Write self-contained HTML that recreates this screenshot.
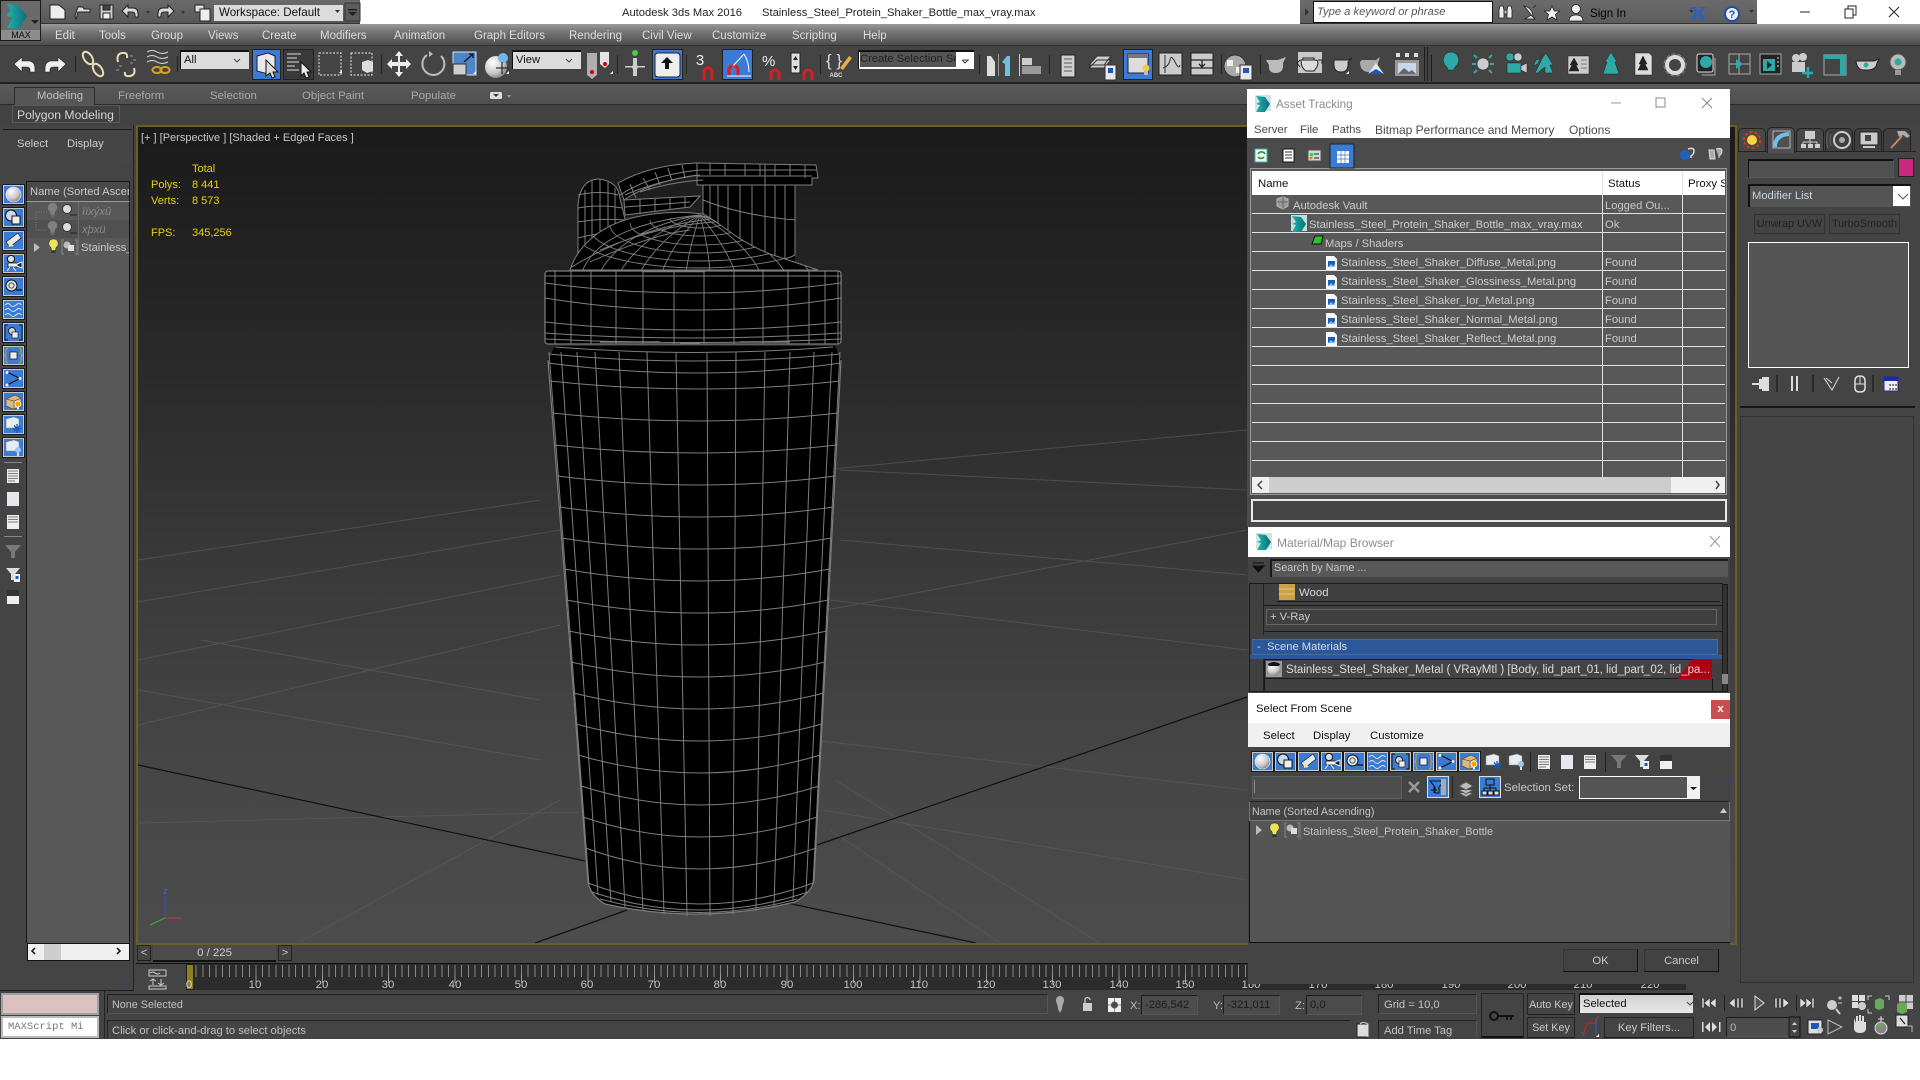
<!DOCTYPE html>
<html><head><meta charset="utf-8"><title>Autodesk 3ds Max 2016</title>
<style>
html,body{margin:0;padding:0;background:#fff;width:1920px;height:1080px;overflow:hidden}
body{position:relative;font:11.2px/14px "Liberation Sans",Arial,sans-serif;color:#cfcfcf}
div,span,svg{position:absolute;box-sizing:border-box}
.t{white-space:nowrap;margin-top:1px}
.t[style*="height:"]{margin-top:0}
.c{transform:translateX(-50%)}
.b{border:1px solid #222}
.m{color:#dcdcdc;top:28px;font-size:11.5px}
.r{color:#a8a8a8;top:88px;font-size:11.4px}
.d{color:#4a4a4a;top:122px;font-size:11.4px}
.l{left:0;right:0;height:1px;background:#e2e2e2}
.f{color:#ccc}
.n{left:1309px}
.st{left:1605px;color:#c8c8c8}
.y{color:#e6cf10;font-size:11px}
.tl{top:978px;color:#c4c4c4;font-size:11.4px;transform:translateX(-50%);margin-top:0}
.bt{background:#444;border:1px solid #262626;border-right-color:#222;border-bottom-color:#1c1c1c;color:#c8c8c8;text-align:center}
.bd{background:#4c4c4c;border:1px solid #1d1d1d;border-right-color:#555;border-bottom-color:#585858}
</style></head><body>

<!-- base -->
<div style="left:0;top:0;width:1920px;height:24px;background:#fff"></div>
<div style="left:0;top:24px;width:1920px;height:1015px;background:#444"></div>

<!-- viewport -->
<div style="left:136px;top:125px;width:1601px;height:820px;border:2px solid #6d5c26;background:linear-gradient(#1a1a1a 0,#2a2a2a 30%,#3a3a3a 55%,#464646 78%,#4c4c4c 100%);overflow:hidden"></div>
<svg style="left:0;top:0" width="1920" height="1080" viewBox="0 0 1920 1080">
<defs>
<clipPath id="vp"><rect x="138" y="127" width="1597" height="816"/></clipPath>
<clipPath id="dome"><path d="M570 270C578 245 600 228 625 220C650 212 680 211 703 214C720 222 735 240 770 254L818 270Z"/></clipPath>
<radialGradient id="ball" cx=".35" cy=".3" r=".8"><stop offset="0" stop-color="#fff"/><stop offset=".6" stop-color="#c8c8c8"/><stop offset="1" stop-color="#777"/></radialGradient>
<linearGradient id="teal" x1="0" x2="1"><stop offset="0" stop-color="#1fb5ad"/><stop offset="1" stop-color="#0d6f78"/></linearGradient>
<g id="b0"><rect x="-1" y="-1" width="23" height="21" fill="#1a1a1a"/><rect x=".5" y=".5" width="20" height="18" fill="#3a7bd5" stroke="#c8c8c8"/></g>
<g id="s0"><circle cx="10.500" cy="9.500" r="7.500" fill="url(#ball)" stroke="#eee" stroke-width=".6"/></g>
<g id="s1"><circle cx="8" cy="7.500" r="5.500" fill="#cfd7e0" stroke="#111"/><rect x="9" y="8" width="8" height="8" fill="#eee" stroke="#111"/></g>
<g id="s2"><path d="M15 2l3 5L7 16 3 11z" fill="#e8e8e8" stroke="#222" stroke-width=".7"/><path d="M5 10l6 5-5 1z" fill="#f2e6a8"/></g>
<g id="s3"><circle cx="8" cy="5" r="3.600" fill="#ddd" stroke="#111"/><rect x="5" y="9" width="9" height="4" fill="#eee" stroke="#111" stroke-width=".7"/><path d="M14 10l5-2v6l-5-2zM7 13l-3 4M10 13l3 4" stroke="#eee" fill="#222"/></g>
<g id="s4"><circle cx="8.500" cy="8.500" r="5.500" fill="#dfe5ea" stroke="#111"/><circle cx="8.500" cy="8.500" r="2.600" fill="none" stroke="#555"/><path d="M13 13h6" stroke="#111" stroke-width="1.300"/></g>
<g id="s5" fill="none" stroke="#dfe6f0" stroke-width=".9"><path d="M2 5q3-3 5.500 0t5.500 0 5.500 0M2 10q3-3 5.500 0t5.500 0 5.500 0M2 15q3-3 5.500 0t5.500 0 5.500 0"/></g>
<g id="s6"><path d="M5 2H2v15h3M16 2h3v15h-3" fill="none" stroke="#111"/><circle cx="9" cy="8" r="3.500" fill="#cfd7e0" stroke="#222"/><rect x="9" y="9" width="6" height="6" fill="#eee" stroke="#222" stroke-width=".7"/></g>
<g id="s7"><path d="M5 2q-2 0-2 3v2q0 2-1.500 2.500Q3 10 3 12v2q0 3 2 3M16 2q2 0 2 3v2q0 2 1.500 2.500Q18 10 18 12v2q0 3-2 3" fill="none" stroke="#e0a020"/><rect x="7" y="6" width="7" height="7" fill="#eee" stroke="#111" stroke-width=".7"/></g>
<g id="s8"><path d="M4 3l13 6.500L4 16" fill="none" stroke="#111" stroke-width="1.200"/><circle cx="4" cy="3.500" r="1.500" fill="#eee"/><circle cx="17" cy="9.500" r="1.500" fill="#eee"/><circle cx="4" cy="16" r="1.500" fill="#eee"/></g>
<g id="s9"><path d="M3 7l9-4 6 3v9l-8 2-7-3z" fill="#d9b98a" stroke="#553" stroke-width=".7"/><path d="M3 7l8 2 7-3M11 9v8" stroke="#6d5a3a" fill="none" stroke-width=".7"/><circle cx="15" cy="12" r="3" fill="#f5a300" stroke="#fff" stroke-width=".7"/><rect x="14" y="14.500" width="2" height="3" fill="#eee"/></g>
<g id="s10"><path d="M3 4l8-2 5 2v9H3z" fill="#e8edf2" stroke="#888" stroke-width=".6"/><path d="M14 9v9M9.500 13.500h9M11 10.500l6 6M17 10.500l-6 6" stroke="#1d58b8" stroke-width="1.300"/></g>
<g id="s11"><path d="M3 4l8-2 5 2v9H3z" fill="#e8edf2" stroke="#888" stroke-width=".6"/><circle cx="15" cy="12" r="3" fill="#9cc8ee"/><rect x="14" y="15" width="2" height="3" fill="#ddd"/></g>
<g id="bulbY"><path d="M4.500 0a4.500 4.500 0 0 1 3 8c-.8 1-1 2-1 3.500h-4C2.500 10 2 9 1.500 8A4.500 4.500 0 0 1 4.500 0z" fill="#ece25a" stroke="#222" stroke-width=".5"/><rect x="2.500" y="11.500" width="4" height="2.500" fill="#333"/></g>
<g id="bulbG"><path d="M4.500 0a4.500 4.500 0 0 1 3 8c-.8 1-1 2-1 3.500h-4C2.500 10 2 9 1.500 8A4.500 4.500 0 0 1 4.500 0z" fill="#808080"/><rect x="2.500" y="11.500" width="4" height="2.500" fill="#6a6a6a"/></g>
<g id="doc"><path d="M1 0h8l3 3v11H1z" fill="#f5f7fa"/><rect x="3" y="5" width="7" height="6" fill="#1a5fb0"/><path d="M3 11l3-3 2 2 2-2v3z" fill="#7cc0f0"/></g>
<g id="logo"><path d="M1 1l9 1 5 7-5 8-9 0 4-7-4-1 4-2z" fill="url(#teal)"/></g>
</defs>

<g clip-path="url(#vp)">
<!-- grid -->
<g stroke="#5e5e5e" stroke-width="1" fill="none" opacity=".6">
<path d="M138 602L560 530M138 660L560 575M138 725L560 625M138 823L583 812M540 760L138 690"/>
<path d="M821 741L1247 790M822 810L1247 880M840 540L1247 575M830 600L1247 650M840 470L1247 490M300 942L560 800M540 700L200 640M1000 943L830 830M1100 943L835 780"/>
<path d="M138 560L540 500M820 470L1247 430M826 610L1247 530"/>
</g>
<g stroke="#111" stroke-width="1.200" fill="none">
<path d="M138 765L585 861M817 845L1247 697M627 910L535 943M787 903L976 943"/>
</g>
<!-- bottle body -->
<path d="M555 346H835L841 360 814 880Q812 892 795 902Q700 925 605 904Q590 895 588 882L548 360Z" fill="#000"/>
<g fill="none" stroke="#7e7e7e" stroke-width="1">
<path d="M585.500 848Q700 890 816 848M583 817Q700 857 817 817M581 786Q700 824 819 786M578 755Q700 791 820.500 755M576 724Q700 758 822 724M573.600 693Q700 725 824 693M571 662Q700 692 825 662M569 631Q700 659 827 631M566.500 600Q700 626 828.500 600M564 569Q700 593 830 569M561.700 538Q700 560 832 538M559 507Q700 527 833 507M557 476Q700 494 835 476M554.500 445Q700 461 836.600 445M552 413Q700 429 838 413M549.600 381Q700 397 840 381M548 363Q700 383 841 363"/>
<path d="M555 347Q694 358 833 347M549 354Q694 368 840 354"/>
<path d="M588 883Q700 925 813 883M592 892Q700 928 808 892M600 899Q700 926 797 899"/>
<path d="M549 352L589 885M561 352L598 895M577 352L611 902M595 352L625 907M619 352L643 911M647 352L664 914M676 352L687 916M707 352L710 916M736 352L733 914M765 352L756 911M790 352L774 907M814 352L793 901M832 352L806 893M840 352L813 885"/>
<path d="M548 360L588 882Q590 895 605 904Q700 925 795 902Q812 892 814 880L841 360" stroke-width="1.200"/>
</g>
<!-- lid band -->
<rect x="545" y="271" width="296" height="73" rx="3" fill="#000"/>
<g fill="none" stroke="#7e7e7e">
<rect x="545" y="271" width="296" height="73" rx="3" stroke-width="1.200"/>
<path d="M545 276H841M545 283Q690 303 841 283M545 298Q690 322 841 298M545 322Q690 338 841 322M545 333Q690 343 841 333M545 339Q690 346 841 339"/>
<path d="M555 271V344M571 271V344M591 271V344M616 271V344M643 271V344M674 271V344M704 271V344M734 271V344M763 271V344M788 271V344M809 271V344M825 271V344M838 271V344"/>
<path d="M642 271.500H705M600 342H660M680 343H700M740 342H790" stroke-width="1.600"/>
</g>
<!-- loop/handle -->
<path d="M578 265V205Q580 180 598 179Q612 180 618 190L630 240L590 262Z" fill="#000" stroke="#7e7e7e"/>
<g fill="none" stroke="#7e7e7e">
<path d="M585 262V190M592 258V181M600 252V179M608 244V182M615 236V188M578 195Q600 190 618 195M578 208Q600 204 622 208M578 222Q600 218 625 220M578 238Q600 232 627 232M578 252Q590 248 605 245"/>
</g>
<!-- cap -->
<rect x="703" y="183" width="92" height="78" fill="#000"/>
<g fill="none" stroke="#7e7e7e">
<path d="M703 183V215M710 183V222M718 183V228M728 183V234M740 183V242M752 183V250M765 183V258M775 183V260M785 183V261M795 183V255"/>
<path d="M703 200Q740 215 795 220M703 215Q725 235 763 257Q780 263 795 255"/>
</g>
<!-- dome -->
<path d="M570 270C578 245 600 228 625 220C650 212 680 211 703 214C720 222 735 240 770 254L818 270Z" fill="#000" stroke="#7e7e7e"/>
<g clip-path="url(#dome)" fill="none" stroke="#7e7e7e" stroke-width=".9">
<path d="M670 218A30 10 0 0 0 730 218M650 220A50 16 0 0 0 750 220M630 223A70 22 0 0 0 770 223M610 225A90 28 0 0 0 790 225M590 228A110 33 0 0 0 810 228M575 232A125 36 0 0 0 825 232"/>
<path d="M700 215Q600 225 582 272M700 215Q625 228 600 272M700 215Q645 232 620 272M700 215Q660 238 640 272M700 215Q672 245 662 272M700 215Q690 245 686 272M700 215Q708 245 710 272M700 215Q725 245 735 272M700 215Q745 242 760 272M700 215Q765 240 785 272M700 215Q785 238 810 272"/>
<path d="M570 268Q640 225 720 218M600 250Q660 225 715 222M590 262Q650 235 690 230"/>
</g>
<!-- flip top -->
<path d="M618 183Q650 165 697 163L816 165 818 178 812 178 812 185H697V175Q650 182 624 200Z" fill="#000" stroke="#7e7e7e"/>
<g fill="none" stroke="#7e7e7e">
<path d="M697 163V185M620 195Q650 175 700 170H816M630 184L636 198M643 178L650 190M655 172L660 185M668 168L672 181M682 165L685 178M710 163V175M725 164V176M745 164V176M760 164V176M765 164V185M775 165V176M790 165V176M805 165V178M697 176H812"/>
<path d="M624 200L700 196 690 207 625 215ZM640 199V214M655 198V212M670 197V210M685 197V208M625 207L690 202" fill="#000"/>
<path d="M625 195Q660 180 700 175M640 192Q670 182 703 180" />
</g>
<!-- axis -->
<g fill="none" stroke-width="1"><path d="M165 918V895" stroke="#3050d8"/><path d="M165 918L150 925" stroke="#2fb32f"/><path d="M165 918H182" stroke="#d83030"/></g>
</g>
</svg>
<div class="t" style="left:163px;top:883px;font-size:9px;color:#4866e0">z</div>
<div class="t" style="left:141px;top:130px;color:#c8c8c8;font-size:11px">[+ ] [Perspective ] [Shaded + Edged Faces ]</div>
<div class="t y" style="left:192px;top:161px">Total</div>
<div class="t y" style="left:151px;top:177px">Polys:</div><div class="t y" style="left:192px;top:177px">8 441</div>
<div class="t y" style="left:151px;top:193px">Verts:</div><div class="t y" style="left:192px;top:193px">8 573</div>
<div class="t y" style="left:151px;top:225px">FPS:</div><div class="t y" style="left:192px;top:225px">345,256</div>

<!-- title bar -->
<div style="left:0;top:0;width:360px;height:24px;background:linear-gradient(#6a6a6a,#585858);border-bottom:1px solid #333"></div>
<div style="left:214px;top:5px;width:129px;height:16px;background:#dcdcdc"></div>
<div class="t" style="left:219px;top:5px;color:#111;font-size:11.6px">Workspace: Default</div>
<div class="t" style="left:622px;top:5px;color:#222">Autodesk 3ds Max 2016</div>
<div class="t" style="left:762px;top:5px;color:#222">Stainless_Steel_Protein_Shaker_Bottle_max_vray.max</div>
<div style="left:1300px;top:0;width:457px;height:24px;background:linear-gradient(#6b6b6b,#5d5d5d);border-bottom:1px solid #333"></div>
<div class="t" style="left:1313px;top:1px;width:180px;height:22px;background:#fff;border:1px solid #111;font-style:italic;color:#555;padding:3px 0 0 3px">Type a keyword or phrase</div>
<div class="t" style="left:1590px;top:6px;color:#000;font-size:11.6px">Sign In</div>

<!-- menu bar -->
<div style="left:0;top:24px;width:1920px;height:21px;background:linear-gradient(#9a9a9a,#777 35%,#4d4d4d)"></div>
<span class="t m" style="left:55px">Edit</span><span class="t m" style="left:99px">Tools</span><span class="t m" style="left:151px">Group</span><span class="t m" style="left:208px">Views</span><span class="t m" style="left:262px">Create</span><span class="t m" style="left:320px">Modifiers</span><span class="t m" style="left:394px">Animation</span><span class="t m" style="left:474px">Graph Editors</span><span class="t m" style="left:569px">Rendering</span><span class="t m" style="left:642px">Civil View</span><span class="t m" style="left:712px">Customize</span><span class="t m" style="left:792px">Scripting</span><span class="t m" style="left:863px">Help</span>

<!-- main toolbar -->
<div style="left:0;top:45px;width:1920px;height:39px;background:#444;border-top:1px solid #333;border-bottom:2px solid #222"></div>
<div class="t" style="left:180px;top:50px;width:69px;height:19px;background:#dcdcdc;border-top:2px solid #111;border-left:1px solid #111;color:#111;padding:2px 0 0 3px;line-height:13px">All</div>
<div class="t" style="left:512px;top:50px;width:69px;height:19px;background:#dcdcdc;border-top:2px solid #111;border-left:1px solid #111;color:#111;padding:2px 0 0 3px;line-height:13px">View</div>
<div style="left:858px;top:50px;width:116px;height:19px;background:#fff;border-top:2px solid #111;border-left:1px solid #111"></div>
<div class="t" style="left:860px;top:52px;width:96px;height:15px;background:#555;color:#222;overflow:hidden;font-size:11.2px;line-height:14px">Create Selection Se</div>
<div style="left:252px;top:49px;width:29px;height:31px;background:#3a7bd5;border:1px solid #222"></div>
<div style="left:283px;top:49px;width:31px;height:31px;background:#3a3a3a;border:1px solid #222"></div>
<div style="left:652px;top:49px;width:31px;height:31px;background:#3a7bd5;border:1px solid #222"></div>
<div style="left:722px;top:49px;width:31px;height:31px;background:#3a7bd5;border:1px solid #222"></div>
<div style="left:1123px;top:49px;width:30px;height:31px;background:#3a7bd5;border:1px solid #222"></div>
<div style="left:1298px;top:52px;width:24px;height:21px;background:#c9c9c9"></div>

<!-- ribbon -->
<div style="left:0;top:84px;width:1920px;height:21px;background:linear-gradient(#5a5a5a,#505050);border-bottom:1px solid #2c2c2c"></div>
<div style="left:0;top:105px;width:1920px;height:20px;background:#424242"></div>
<div style="left:14px;top:87px;width:81px;height:19px;background:#565656;border:1px solid #2a2a2a;border-bottom:none"></div>
<div class="t c" style="left:60px;top:88px;color:#c0c0c0;font-size:11.4px">Modeling</div>
<span class="t r" style="left:118px">Freeform</span><span class="t r" style="left:210px">Selection</span><span class="t r" style="left:302px">Object Paint</span><span class="t r" style="left:411px">Populate</span>
<div class="t" style="left:12px;top:105px;width:108px;height:18px;border:1px solid #5a5a5a;background:#404040;color:#d4d4d4;padding:2px 0 0 4px;font-size:12.2px">Polygon Modeling</div>

<!-- left panel -->
<div style="left:0;top:125px;width:134px;height:865px;background:#444;border-right:1px solid #222"></div>
<div style="left:3px;top:129px;width:129px;height:1px;background:#1a1a1a"></div>
<div class="t" style="left:17px;top:136px;color:#c4cdd4">Select</div>
<div class="t" style="left:67px;top:136px;color:#c4cdd4">Display</div>
<div class="t" style="left:119px;top:154px;color:#46467a;font-size:10px">&gt;&gt;</div>
<div style="left:26px;top:181px;width:104px;height:762px;background:#585858;border-left:1px solid #151515;border-right:1px solid #151515"></div>
<div class="t" style="left:26px;top:181px;width:104px;height:21px;background:#4a4a4a;border:1px solid #151515;border-bottom:1px solid #9a9a9a;color:#c8c8c8;overflow:hidden;padding:3px 0 0 3px;font-size:11.2px">Name (Sorted Ascending)</div>
<div style="left:27px;top:220px;width:102px;height:18px;background:#505050"></div>
<div style="left:78px;top:202px;width:1px;height:54px;background:#6a6a6a"></div>
<div class="t" style="left:82px;top:204px;width:47px;overflow:hidden;color:#8a8a8a;font-style:italic">ïïxýxû</div>
<div class="t" style="left:82px;top:222px;width:47px;overflow:hidden;color:#8a8a8a;font-style:italic">xþxü</div>
<div class="t" style="left:81px;top:240px;width:48px;overflow:hidden;color:#c8c8c8;font-size:11.2px">Stainless_Steel_Protein</div>
<div style="left:27px;top:943px;width:103px;height:18px;background:#f0f0f0;border:1px solid #111"></div>
<div style="left:44px;top:944px;width:17px;height:16px;background:#cdcdcd"></div>
<div class="t" style="left:119px;top:973px;color:#46467a;font-size:10px">&gt;&gt;</div>

<!-- timeline -->
<div class="bt t" style="left:137px;top:945px;width:14px;height:16px;line-height:14px">&lt;</div>
<div class="t" style="left:153px;top:945px;width:123px;height:17px;background:#4b4b4b;border-bottom:2px solid #111;text-align:center;font-size:11.4px;line-height:16px">0 / 225</div>
<div class="bt t" style="left:278px;top:945px;width:14px;height:16px;line-height:14px">&gt;</div>
<div style="left:136px;top:963px;width:1550px;height:27px;background:#2c2c2c;border-top:1px solid #111"></div>
<div style="left:136px;top:964px;width:50px;height:26px;background:#444"></div>
<div style="left:189px;top:965px;width:1497px;height:12px;background:repeating-linear-gradient(90deg,#888 0,#888 1px,transparent 1px,transparent 6.64px)"></div>
<div style="left:189px;top:975px;width:1497px;height:8px;background:repeating-linear-gradient(90deg,#999 0,#999 1px,transparent 1px,transparent 66.4px)"></div>
<div style="left:186px;top:964px;width:8px;height:26px;background:#8d7f22;border:1px solid #222"></div>
<span class="tl" style="left:189px;color:#ddd">0</span>
<span class="t tl" style="left:255px">10</span><span class="t tl" style="left:322px">20</span><span class="t tl" style="left:388px">30</span><span class="t tl" style="left:455px">40</span><span class="t tl" style="left:521px">50</span><span class="t tl" style="left:587px">60</span><span class="t tl" style="left:654px">70</span><span class="t tl" style="left:720px">80</span><span class="t tl" style="left:787px">90</span><span class="t tl" style="left:853px">100</span><span class="t tl" style="left:919px">110</span><span class="t tl" style="left:986px">120</span><span class="t tl" style="left:1052px">130</span><span class="t tl" style="left:1119px">140</span><span class="t tl" style="left:1185px">150</span><span class="t tl" style="left:1251px">160</span><span class="t tl" style="left:1318px">170</span><span class="t tl" style="left:1384px">180</span><span class="t tl" style="left:1451px">190</span><span class="t tl" style="left:1517px">200</span><span class="t tl" style="left:1583px">210</span><span class="t tl" style="left:1650px">220</span>

<!-- status -->
<div style="left:0;top:990px;width:1920px;height:49px;background:#444"></div>
<div style="left:0;top:990px;width:134px;height:1px;background:#1c1c1c"></div>
<div style="left:104px;top:990px;width:1px;height:49px;background:#222"></div>
<div style="left:1px;top:993px;width:98px;height:22px;background:#dcc1c1;border:2px solid #a0a0a0"></div>
<div class="t" style="left:1px;top:1016px;width:98px;height:22px;background:#fff;border:2px solid #bbb;color:#777;font:10.500px/18px 'Liberation Mono',monospace;padding-left:5px;overflow:hidden">MAXScript Mi</div>
<div class="t" style="left:107px;top:994px;width:941px;height:20px;border:1px solid #222;border-right-color:#555;border-bottom-color:#555;padding:3px 0 0 4px;color:#c0c0c0;font-size:10.8px">None Selected</div>
<div class="t" style="left:107px;top:1020px;width:1243px;height:19px;border-top:1px solid #222;border-left:1px solid #222;padding:3px 0 0 4px;color:#c0c0c0">Click or click-and-drag to select objects</div>
<span class="t" style="left:1130px;top:998px;color:#b8b8b8">X:</span><div class="t bd" style="left:1141px;top:995px;width:57px;height:20px;color:#1c1c1c;padding:2px 0 0 3px">-286,542</div>
<span class="t" style="left:1213px;top:998px;color:#b8b8b8">Y:</span><div class="t bd" style="left:1223px;top:995px;width:57px;height:20px;color:#1c1c1c;padding:2px 0 0 3px">-321,011</div>
<span class="t" style="left:1295px;top:998px;color:#b8b8b8">Z:</span><div class="t bd" style="left:1306px;top:995px;width:56px;height:20px;color:#1c1c1c;padding:2px 0 0 3px">0,0</div>
<div class="t" style="left:1378px;top:994px;width:99px;height:20px;border:1px solid #222;border-right-color:#555;border-bottom-color:#555;padding:3px 0 0 5px;color:#c4c4c4">Grid = 10,0</div>
<div class="t" style="left:1378px;top:1020px;width:99px;height:19px;border-top:1px solid #222;border-left:1px solid #222;border-right:1px solid #555;padding:3px 0 0 5px;color:#c4c4c4">Add Time Tag</div>
<div style="left:1481px;top:993px;width:43px;height:45px;background:#444;border:1px solid #262626;border-bottom:2px solid #111"></div>
<div class="t bt" style="left:1527px;top:993px;width:48px;height:22px;line-height:22px;font-size:10.8px">Auto Key</div>
<div class="t bt" style="left:1527px;top:1017px;width:48px;height:21px;line-height:21px;font-size:10.8px">Set Key</div>
<div class="t" style="left:1579px;top:993px;width:114px;height:20px;background:linear-gradient(#d0d0d0,#e8e8e8);border-top:2px solid #111;border-left:1px solid #111;color:#111;padding:3px 0 0 3px;line-height:13px">Selected</div>
<div class="t bt" style="left:1604px;top:1017px;width:90px;height:21px;line-height:21px">Key Filters...</div>
<div class="t bd" style="left:1726px;top:1017px;width:63px;height:20px;padding:3px 0 0 3px;color:#bbb">0</div>

<!-- command panel -->
<div style="left:1737px;top:125px;width:183px;height:865px;background:#444"></div>
<div style="left:1737px;top:985px;width:183px;height:5px;background:#444"></div>
<div style="left:1738px;top:128px;width:178px;height:24px;border-bottom:1px solid #222"></div>
<div style="left:1738px;top:128px;width:28px;height:24px;background:#484848;border:1px solid #222;border-radius:5px 5px 0 0"></div>
<div style="left:1767px;top:127px;width:28px;height:26px;background:#505050;border:1px solid #222;border-bottom:none;border-radius:5px 5px 0 0"></div>
<div style="left:1796px;top:128px;width:28px;height:24px;background:#484848;border:1px solid #222;border-radius:5px 5px 0 0"></div>
<div style="left:1825px;top:128px;width:28px;height:24px;background:#3f3f3f;border:1px solid #222;border-radius:5px 5px 0 0"></div>
<div style="left:1854px;top:128px;width:28px;height:24px;background:#3f3f3f;border:1px solid #222;border-radius:5px 5px 0 0"></div>
<div style="left:1883px;top:128px;width:28px;height:24px;background:#3f3f3f;border:1px solid #222;border-radius:5px 5px 0 0"></div>
<div class="bd" style="left:1748px;top:159px;width:146px;height:19px;background:#505050;border-top:2px solid #111;border-left:1px solid #111"></div>
<div style="left:1898px;top:158px;width:16px;height:19px;background:#c8287f;border:1px solid #222"></div>
<div class="t" style="left:1748px;top:184px;width:163px;height:23px;background:#545454;border-top:2px solid #111;border-left:2px solid #111;color:#c7d3e3;padding:3px 0 0 2px;font-size:11.2px">Modifier List</div>
<div style="left:1893px;top:186px;width:17px;height:20px;background:#fff"></div>
<div class="t bt" style="left:1754px;top:214px;width:71px;height:20px;color:#222;line-height:18px;border-color:#333;font-size:10.8px">Unwrap UVW</div>
<div class="t bt" style="left:1829px;top:214px;width:71px;height:20px;color:#222;line-height:18px;border-color:#333;font-size:10.8px">TurboSmooth</div>
<div style="left:1748px;top:242px;width:161px;height:126px;background:#555;border:1px solid #fff"></div>
<div style="left:1740px;top:406px;width:175px;height:2px;background:#151515"></div>
<div style="left:1740px;top:416px;width:174px;height:567px;border:1px solid #333;background:#444"></div>

<!-- icons in app chrome -->
<svg style="left:0;top:0" width="1920" height="1080" viewBox="0 0 1920 1080">
<!-- MAX button -->
<rect x=".5" y=".5" width="40" height="40" fill="#6a6a6a" stroke="#1c1c1c"/>
<rect x="1" y="30" width="39" height="10" fill="#cfcfcf" opacity=".35"/>
<path d="M7 4l11 1 9 11-8 13-12-1 5-10-6-3 5-4z" fill="url(#teal)"/><path d="M31 20h8l-4 4z" fill="#222"/>
<text x="21" y="38" font-family="Liberation Sans" font-size="9" fill="#111" text-anchor="middle">MAX</text>
<!-- quick access -->
<g stroke="#222" stroke-width="1"><path d="M50 5h9l6 5v9H50z" fill="#eee"/><path d="M75 16l3-9h5l1 2h6v3H78l-2 7z" fill="#ddd"/><path d="M100 5h13v14h-13z" fill="#ccc"/><rect x="103" y="5" width="7" height="5" fill="#444"/><rect x="103" y="13" width="7" height="6" fill="#eee"/></g>
<path d="M122 11l6-6v3h5q5 0 5 6v3h-3v-2q0-3-3-3h-4v5z" fill="#ddd" stroke="#222"/><path d="M174 11l-6-6v3h-5q-5 0-5 6v3h3v-2q0-3 3-3h4v5z" fill="#ddd" stroke="#222"/>
<path d="M146 11h4l-2 3zM181 11h4l-2 3zM335 10h5l-2.500 3z" fill="#333"/>
<rect x="195" y="5" width="9" height="7" fill="#ddd" stroke="#222"/><rect x="200" y="9" width="10" height="12" fill="#eee" stroke="#222"/>
<rect x="345" y="3" width="15" height="18" fill="#5c5c5c" stroke="#333"/><path d="M348 9h9v1.500h-9zM348 12h9l-4.500 4z" fill="#222"/>
<!-- right header icons -->
<g fill="#eee" stroke="#222" stroke-width=".8">
<path d="M1499 10l1-4h3l1 4v8h-5zM1507 10l1-4h3l1 4v8h-5z"/><rect x="1504" y="10" width="3" height="4" fill="#bbb"/>
<path d="M1524 6q9 2 9 11zM1525 19h10l-4-4z" fill="#ddd"/><path d="M1533 8l3-3" fill="none"/>
<path d="M1552 6l2.300 5h5.200l-4 3.500 1.500 5.500-5-3-5 3 1.500-5.500-4-3.500h5.200z" fill="#eee"/>
<circle cx="1576" cy="9" r="4.500"/><path d="M1569 21q0-6 7-6t7 6z"/></g>
<path d="M1689 10h5l-2.500 3zM1749 10h5l-2.500 3z" fill="#333"/>
<path d="M1690 7h6l2 4 3-4h5l-4 6 4 7h-6l-2-4-3 4h-5l4-7z" fill="#3860a8"/>
<circle cx="1732" cy="14" r="7" fill="#eef" stroke="#2050a0" stroke-width="2"/>
<text x="1732" y="18" font-family="Liberation Sans" font-size="11" font-weight="bold" fill="#2050a0" text-anchor="middle">?</text>
<g stroke="#222" fill="none"><path d="M1800 12h10M1845 9h8v9h-8zM1848 9V6h8v9h-3M1889 7l10 10M1899 7l-10 10"/></g>
<path d="M1305 8l4 4-4 4z" fill="#333"/>

<!-- main toolbar icons -->
<g fill="#f0f0f0" stroke="#222" stroke-width=".6">
<path d="M14 64l8-7v4h6q7 0 7 8v3h-5v-2q0-3-3-3h-5v5z"/>
<path d="M66 64l-8-7v4h-6q-7 0-7 8v3h5v-2q0-3 3-3h5v5z"/>
</g>
<g fill="none" stroke="#e9ddb8" stroke-width="2"><ellipse cx="88" cy="58" rx="4" ry="7" transform="rotate(-35 88 58)"/><ellipse cx="98" cy="70" rx="4" ry="7" transform="rotate(-35 98 70)"/><path d="M118 62q-2-8 4-9t5 5M134 68q2 7-4 8t-5-4"/></g>
<g fill="none" stroke="#ddd" stroke-width="1"><path d="M147 52q5-3 10 0t11 0M147 57q5-3 10 0t11 0M147 62q5-3 10 0t11 0"/></g>
<g fill="none" stroke="#d8a020" stroke-width="2"><ellipse cx="157" cy="70" rx="4.500" ry="3"/><ellipse cx="165" cy="70" rx="4.500" ry="3"/></g>
<path d="M130 56h3M133 60h3M130 63h3M119 66h3M116 70h3" stroke="#999"/>
<g fill="#222"><rect x="75" y="56" width="1" height="16"/><rect x="177" y="56" width="1" height="16"/><rect x="381" y="55" width="1" height="19"/><rect x="617" y="55" width="1" height="19"/><rect x="686" y="55" width="1" height="19"/><rect x="820" y="55" width="1" height="19"/><rect x="1049" y="55" width="1" height="19"/><rect x="1221" y="55" width="1" height="19"/><rect x="979" y="55" width="1" height="19"/><rect x="1260" y="55" width="1" height="19"/></g>
<!-- select -->
<path d="M257 56l11-3 7 3v14l-7 4-11-3z" fill="#e8e8e8" stroke="#222"/><path d="M266 60l12 12-5 0 2 5-3 1-2-5-4 3z" fill="#ddd" stroke="#111"/>
<path d="M287 54h14M287 58h10M287 62h12M287 66h8M287 70h12" stroke="#ddd"/><path d="M301 62l10 10-4 0 2 5-3 1-2-5-3 3z" fill="#eee" stroke="#111"/>
<g fill="none" stroke="#eee" stroke-dasharray="2 1.500"><rect x="319" y="53" width="22" height="22"/><rect x="351" y="53" width="21" height="22"/></g><path d="M362 62l6-2 5 2v9l-6 2-5-3z" fill="#ddd"/><path d="M339 73l3-3v3z" fill="#fff"/>
<!-- move rotate scale -->
<path d="M399 51l4 5h-3v6h6v-3l5 5-5 5v-3h-6v6h3l-4 5-4-5h3v-6h-6v3l-5-5 5-5v3h6v-6h-3z" fill="#eee"/>
<path d="M441 56a11 11 0 1 1-14-1" fill="none" stroke="#bdbdbd" stroke-width="2"/><path d="M429 51l4 3-4 3z" fill="#bdbdbd"/>
<rect x="453" y="52" width="23" height="23" fill="#4c86c8" stroke="#dde"/><rect x="453" y="64" width="13" height="11" fill="#cfcfcf" stroke="#333"/><path d="M464 62l9-8M469 54h4v4" stroke="#111" fill="none" stroke-width="1.300"/><path d="M473 74l3-3v3zM506 74l3-3v3zM610 74l3-3v3z" fill="#fff"/>
<circle cx="496" cy="67" r="11" fill="url(#ball)"/><circle cx="503" cy="58" r="5" fill="#6fb5f0"/><path d="M502 62v12M496 68h12" stroke="#111"/>
<!-- view pivots -->
<path d="M587 53h10v22l-5 4-5-4z" fill="#aeaeae"/><path d="M600 52h9v12l-4 4-5-4z" fill="#e4e4e4"/><circle cx="592" cy="72" r="2" fill="#c00"/><circle cx="605" cy="64" r="2" fill="#c00"/>
<g fill="#ccc"><rect x="633" y="58" width="4" height="18"/><circle cx="635" cy="67" r="3"/><rect x="625" y="66" width="20" height="1.500"/></g><circle cx="635" cy="53" r="3" fill="#4c4"/>
<!-- blue up -->
<rect x="655" y="53" width="25" height="24" rx="3" fill="#eee" stroke="#222"/><path d="M667 57l6 6h-4v6h-4v-6h-4z" fill="#111"/>
<!-- snaps -->
<text x="700" y="65" font-family="Liberation Sans" font-size="15" fill="#eee" text-anchor="middle">3</text>
<g fill="none" stroke="#d81e1e" stroke-width="3"><path d="M704 80v-8a4 4 0 0 1 8 0v8"/><path d="M729 76v-6a4.500 4.500 0 0 1 9 0v6"/><path d="M771 80v-6a4 4 0 0 1 8 0v6"/><path d="M804 80v-6a4 4 0 0 1 8 0v6"/></g>
<path d="M727 76h24M733 66l11-12M744 54q5 8 5 18" fill="none" stroke="#fff"/>
<text x="762" y="66" font-family="Liberation Sans" font-size="15" fill="#eee">%</text>
<rect x="791" y="53" width="9" height="20" fill="#ddd" stroke="#222"/><path d="M793 60l2.500-4 2.500 4zM793 66l2.500 4 2.500-4z" fill="#222"/>
<!-- braces -->
<text x="834" y="66" font-family="Liberation Sans" font-size="17" fill="#ddd" text-anchor="middle">{ }</text><path d="M840 68l9-12 3 2-9 12z" fill="#e0b040"/><text x="836" y="77" font-family="Liberation Sans" font-size="6" font-weight="bold" fill="#ddd" text-anchor="middle">ABC</text>
<path d="M969 60h-6M962 60l3 3 3-3" stroke="#444" fill="none"/><path d="M240 59l-3 3-3-3M572 59l-3 3-3-3M1693 1002l-3 3-3-3" stroke="#444" fill="none"/>
<!-- mirror -->
<path d="M987 56h4l4 6v14h-8z" fill="#ddd"/><rect x="998" y="54" width="1" height="22" fill="#999"/><path d="M1010 56h-3l-5 6 3 2v12h5z" fill="#6fc0e0"/>
<rect x="1019" y="54" width="1" height="22" fill="#ccc"/><rect x="1022" y="58" width="10" height="7" fill="#ccc"/><rect x="1022" y="66" width="19" height="8" fill="#999"/>
<!-- list etc -->
<rect x="1061" y="55" width="14" height="22" fill="#cfcfcf" stroke="#222"/><path d="M1064 59h8M1064 63h8M1064 67h8M1064 71h8" stroke="#555"/>
<path d="M1089 65l8-9h14l-7 9zM1089 68l8-8h14l-7 8z" fill="#ccc" stroke="#333"/><rect x="1105" y="65" width="11" height="15" fill="#e8e8e8" stroke="#333"/><rect x="1108" y="68" width="5" height="5" fill="#1d58b8"/>
<rect x="1128" y="54" width="20" height="19" fill="#ddd" stroke="#222"/><rect x="1128" y="54" width="20" height="4" fill="#777"/><circle cx="1146" cy="68" r="3.500" fill="#f5c842"/><rect x="1144" y="71" width="4" height="4" fill="#bbb"/>
<rect x="1159" y="53" width="23" height="22" fill="#ccc" stroke="#222"/><path d="M1165 55v18M1163 68q6-2 7-8t5 2 5 3" fill="none" stroke="#333"/>
<rect x="1191" y="53" width="22" height="22" fill="#ccc" stroke="#222"/><path d="M1191 60h22M1191 68h22M1202 60v6M1199 64l3 3 3-3" stroke="#222" fill="none" stroke-width="1.300"/>
<circle cx="1235" cy="66" r="11" fill="#aaa" stroke="#333"/><rect x="1227" y="60" width="6" height="6" fill="#eee"/><rect x="1236" y="67" width="6" height="6" fill="#eee"/><rect x="1240" y="65" width="12" height="15" fill="#e8e8e8" stroke="#333"/><rect x="1243" y="68" width="6" height="5" fill="#1d58b8"/>
<path d="M1266 60h12l8-3-3 6q1 10-7 10t-7-8z" fill="#bbb"/>
<path d="M1301 60h14q3 0 3 3t-4 8h-8q-5-3-5-11z" fill="#ddd" stroke="#222"/><path d="M1318 60h4v4M1303 60v-2h11v2M1300 60l-3 3 3 4" stroke="#222" fill="none"/>
<path d="M1334 62q-1 10 7 10t7-10l4-4-4 2h-14z" fill="#ccc" stroke="#222"/><path d="M1346 74l3-3v3z" fill="#fff"/>
<path d="M1362 60h14l4-3-2 6q0 9-9 9t-9-10z" fill="#aaa"/><path d="M1368 74l8-11 8 11z" fill="#e8e8e8"/><path d="M1368 74l8-5 8 5z" fill="#1d58b8"/>
<rect x="1396" y="53" width="4" height="4" fill="#ddd"/><rect x="1405" y="53" width="4" height="4" fill="#ddd"/><rect x="1414" y="53" width="4" height="4" fill="#ddd"/><rect x="1395" y="60" width="24" height="16" fill="#999"/><rect x="1398" y="63" width="18" height="11" fill="#c8d8e8"/><path d="M1398 74l6-6 5 4 3-2 4 4z" fill="#667"/>
<rect x="1431" y="55" width="1" height="26" fill="#1c1c1c"/><rect x="1427" y="47" width="1" height="34" fill="#1c1c1c"/><rect x="1424" y="47" width="1" height="34" fill="#1c1c1c"/>
<!-- teal icons -->
<g fill="#2fa8a8" stroke="#222" stroke-width=".5">
<path d="M1451 52a8 8 0 0 1 5 14c-1 1-2 3-2 4h-6c0-1-1-3-2-4a8 8 0 0 1 5-14z"/>
<circle cx="1483" cy="64" r="6" fill="#ccc"/>
<path d="M1474 55l3 3M1492 55l-3 3M1474 73l3-3M1492 73l-3-3M1472 64h4M1490 64h4" stroke="#2fa8a8" stroke-width="2"/>
<rect x="1507" y="63" width="14" height="10"/><circle cx="1510" cy="57" r="4"/><circle cx="1518" cy="57" r="4" fill="#ccc"/><path d="M1521 66l6-3v10l-6-3z" fill="#ccc"/>
<path d="M1546 53l7 12h-3l3 8h-8v-6l-3 2-4 4h-3l5-10 3-6zM1543 53l-3 6-4 1-3 6 4-2"/>
<rect x="1568" y="56" width="21" height="18" fill="#ccc"/><path d="M1574 58l4 7h-2l3 6h-10l3-6h-2z" fill="#222"/><path d="M1581 60h6M1581 64h6M1581 68h6" stroke="#222" fill="none"/>
<path d="M1611 52l6 10h-2l4 12h-16l4-12h-2z"/>
<path d="M1635 53h14l3 3v19h-17z" fill="#ddd"/><path d="M1643 56l4 8h-2l3 6h-10l3-6h-2z" fill="#222"/>
</g>
<circle cx="1675" cy="65" r="8" fill="none" stroke="#ddd" stroke-width="4"/><circle cx="1675" cy="65" r="11" fill="none" stroke="#888" stroke-dasharray="4 2"/>
<rect x="1697" y="54" width="16" height="18" rx="2" fill="#222" stroke="#ddd"/><circle cx="1706" cy="62" r="6" fill="#2fa8a8"/><path d="M1715 58v17h-13" stroke="#aaa" fill="none"/>
<rect x="1729" y="54" width="21" height="20" fill="none" stroke="#aaa"/><path d="M1729 64h21M1739 54v20" stroke="#aaa"/><path d="M1736 59l7 5-7 5z" fill="#2fa8a8"/>
<rect x="1760" y="54" width="21" height="20" fill="#222" stroke="#aaa"/><path d="M1763 59h12v12h-12z" fill="#2fa8a8"/><path d="M1767 61l5 4-5 4z" fill="#222"/><path d="M1777 58h2M1777 62h2M1777 66h2" stroke="#ddd"/>
<circle cx="1796" cy="58" r="4" fill="#ccc"/><circle cx="1803" cy="57" r="4" fill="#ccc"/><rect x="1792" y="62" width="13" height="10" fill="#ccc"/><path d="M1808 67v11M1802 73h11" stroke="#2fa8a8" stroke-width="2.500"/>
<rect x="1824" y="55" width="22" height="20" fill="none" stroke="#aaa"/><rect x="1824" y="55" width="22" height="4" fill="#2fa8a8"/><rect x="1840" y="59" width="6" height="16" fill="#2fa8a8"/>
<path d="M1856 61h18l5-2-2 4q-1 7-9 7h-4q-7 0-8-9z" fill="#ccc" stroke="#222"/><circle cx="1866" cy="65" r="2.500" fill="#2fa8a8"/>
<circle cx="1898" cy="62" r="8" fill="#bbb" stroke="#555"/><circle cx="1898" cy="62" r="3.500" fill="#2fa8a8"/><rect x="1895" y="70" width="6" height="5" fill="#999"/>

<!-- ribbon small -->
<rect x="490" y="92" width="12" height="7" rx="1.500" fill="#ddd"/><path d="M493 94h6l-3 3z" fill="#333"/><path d="M507 95h4l-2 3z" fill="#999"/>

<!-- left icons -->
<use href="#b0" x="3" y="185"/><use href="#s0" x="3" y="185"/>
<use href="#b0" x="3" y="208"/><use href="#s1" x="3" y="208"/>
<use href="#b0" x="3" y="231"/><use href="#s2" x="3" y="231"/>
<use href="#b0" x="3" y="254"/><use href="#s3" x="3" y="254"/>
<use href="#b0" x="3" y="277"/><use href="#s4" x="3" y="277"/>
<use href="#b0" x="3" y="300"/><use href="#s5" x="3" y="300"/>
<use href="#b0" x="3" y="323"/><use href="#s6" x="3" y="323"/>
<use href="#b0" x="3" y="346"/><use href="#s7" x="3" y="346"/>
<use href="#b0" x="3" y="369"/><use href="#s8" x="3" y="369"/>
<use href="#b0" x="3" y="392"/><use href="#s9" x="3" y="392"/>
<use href="#b0" x="3" y="415"/><use href="#s10" x="3" y="415"/>
<use href="#b0" x="3" y="438"/><use href="#s11" x="3" y="438"/>
<rect x="4" y="462" width="18" height="1" fill="#888"/><rect x="4" y="536" width="18" height="1" fill="#888"/>
<g id="pg"><rect x="7" y="469" width="12" height="14" fill="#eee"/><path d="M8 471h10M8 473.500h10M8 476h10M8 478.500h10M8 481h7" stroke="#555" stroke-width=".7"/></g>
<rect x="7" y="492" width="12" height="14" fill="#e6e6ec"/>
<rect x="7" y="515" width="12" height="14" fill="#eee"/><path d="M8 517h10M8 519.500h10M8 522h10" stroke="#555" stroke-width=".7"/>
<path d="M5 545h16l-6 7v6h-4v-6z" fill="#777"/>
<path d="M6 568h14l-5 6v6h-4v-6z" fill="#ddd"/><rect x="14" y="574" width="6" height="8" fill="#eee"/><rect x="15.500" y="576" width="3" height="3" fill="#1d58b8"/>
<rect x="7" y="590" width="12" height="14" fill="#eee"/><rect x="7" y="590" width="12" height="6" fill="#333"/>
<!-- tree row icons -->
<use href="#bulbG" x="48" y="203"/><use href="#bulbG" x="48" y="221"/><use href="#bulbY" x="49" y="239"/>
<g fill="none" stroke="#777" stroke-dasharray="1 1.500"><path d="M36 212h11M36 212V230h11"/></g>
<circle cx="67" cy="209" r="4.500" fill="#ddd" stroke="#333"/><path d="M70 215h7" stroke="#222"/><circle cx="67" cy="227" r="4.500" fill="#ddd" stroke="#333"/><path d="M70 233h7" stroke="#222"/>
<path d="M64 240h-2v14h2M75 240h2v14h-2" stroke="#888" fill="none"/><circle cx="67" cy="245" r="3.500" fill="#bbb"/><rect x="68" y="245" width="6" height="6" fill="#ddd"/>
<path d="M34 243l6 4.500-6 4.500z" fill="#bbb"/>
<path d="M32 950l-3 3 3 3M114 950l3 3-3 3" stroke="#111" stroke-width="1.500" fill="none" transform="translate(3,-2)"/>
<!-- timeline config -->
<g stroke="#ccc" fill="none"><rect x="149" y="970" width="17" height="6" /><path d="M150 973q3-2 5 0t5 0M153 979v6M150 981l3-2 3 2M161 979v6M158 983l3 2 3-2"/><rect x="149" y="986" width="17" height="3"/></g>
<!-- status icons -->
<path d="M1060 996a4 4 0 0 1 4 4c0 3-2 5-2 9l-2 4-2-4c0-4-2-6-2-9a4 4 0 0 1 4-4z" fill="#aaa"/>
<rect x="1083" y="1003" width="9" height="8" fill="#ccc"/><path d="M1085 1003v-3a2.500 2.500 0 0 1 5 0" fill="none" stroke="#ccc" stroke-width="1.300"/>
<rect x="1108" y="998" width="13" height="14" fill="#eee"/><circle cx="1114.500" cy="1005" r="3.500" fill="#555"/><path d="M1114.500 998v14M1108 1005h13" stroke="#333" stroke-width=".5"/>
<rect x="1357" y="1024" width="11" height="13" fill="#ddd" stroke="#222"/><path d="M1360 1024q3-3 8 0v13" stroke="#ddd" fill="none"/>
<circle cx="1494" cy="1016" r="4" fill="none" stroke="#111" stroke-width="2"/><path d="M1498 1016h16M1507 1016v4M1511 1016v4" stroke="#111" stroke-width="2" fill="none"/>
<path d="M1583 1036q4-16 8-13t7-7" stroke="#c22" fill="none" stroke-width="1.200"/><path d="M1581 1032l3 3M1596 1018v16" stroke="#3060c0"/><path d="M1596 1037l3-3v3z" fill="#fff"/>
<g transform="translate(0,-4)">
<g fill="#ddd" stroke="#222" stroke-width=".5"><rect x="1702" y="1002" width="2" height="10"/><path d="M1710 1002v10l-6-5zM1716 1002v10l-6-5z"/><path d="M1735 1002v10l-6-5z"/><rect x="1737" y="1002" width="2" height="10"/><rect x="1741" y="1002" width="2" height="10"/></g>
<path d="M1755 1000l9 7-9 7z" fill="#555" stroke="#ddd"/>
<g fill="#ddd" stroke="#222" stroke-width=".5"><rect x="1775" y="1002" width="2" height="10"/><rect x="1779" y="1002" width="2" height="10"/><path d="M1783 1002v10l6-5z"/><path d="M1800 1002v10l6-5zM1806 1002v10l6-5z"/><rect x="1812" y="1002" width="2" height="10"/></g>
<rect x="1796" y="999" width="1" height="16" fill="#222"/><rect x="1724" y="999" width="1" height="16" fill="#222"/>
<g fill="#ddd"><rect x="1702" y="1026" width="1.500" height="10"/><path d="M1710 1026v10l-5-5zM1712 1026v10l5-5z"/><rect x="1719" y="1026" width="1.500" height="10"/></g>
<path d="M1792 1029l2.500-3 2.500 3zM1792 1034l2.500 3 2.500-3z" fill="#ccc"/>
<circle cx="1832" cy="1009" r="5" fill="#ccc"/><path d="M1836 1013l4 5" stroke="#ccc" stroke-width="2"/><path d="M1840 1000v4M1838 1002h4M1838 1007h4" stroke="#ccc"/>
<g fill="#ddd"><rect x="1852" y="999" width="6" height="6"/><rect x="1859" y="999" width="6" height="6"/><rect x="1852" y="1006" width="6" height="6"/><circle cx="1862" cy="1010" r="4" fill="#ccc"/></g>
<path d="M1872 1000h-4v4M1885 1000h4v4M1872 1017h-4v-4" stroke="#ccc" fill="none"/><path d="M1875 1004l5-2 4 2v8l-5 2-4-2z" fill="#6aa85a"/>
<rect x="1899" y="999" width="14" height="14" fill="#ccc"/><path d="M1906 999v14M1899 1006h14" stroke="#444"/><path d="M1897 1008l5-2 5 2v8l-5 2-5-2z" fill="#6aa85a"/>
<rect x="1808" y="1024" width="14" height="14" fill="#ddd" stroke="#222"/><rect x="1811" y="1027" width="8" height="6" fill="#1d58b8"/><circle cx="1820" cy="1034" r="3" fill="#ccc"/>
<path d="M1828 1024l14 7-14 7z" fill="none" stroke="#bbb"/>
<path d="M1854 1022v10q0 5 6 5t6-5v-6h-2v-6h-2v5h-1v-6h-2v6h-1v-5h-2v7z" fill="#ddd"/>
<circle cx="1881" cy="1032" r="6" fill="#888" stroke="#ddd"/><path d="M1881 1020v6M1878 1023h6" stroke="#ddd"/><path d="M1877 1028l4 4 3-4" fill="#6aa85a"/>
<rect x="1896" y="1019" width="12" height="12" fill="#ddd" stroke="#222"/><path d="M1900 1022l5 6" stroke="#111"/><path d="M1906 1030l6 0v6" stroke="#bbb" fill="none"/>
</g>
<rect x="1789" y="1017" width="11" height="20" fill="none" stroke="#111"/>

<!-- command panel icons -->
<circle cx="1752" cy="140" r="5" fill="#ffd040"/><circle cx="1752" cy="140" r="8" fill="none" stroke="#d83818" stroke-width="2" stroke-dasharray="3 2"/>
<rect x="1773" y="131" width="17" height="17" fill="none" stroke="#ddd" stroke-width=".7"/><path d="M1775 147q0-12 14-13" fill="none" stroke="#6fc0e8" stroke-width="4"/>
<rect x="1805" y="131" width="10" height="8" fill="#ccc"/><path d="M1810 139v3M1803 142h14M1803 142v2M1810 142v2M1817 142v2" stroke="#ccc"/><rect x="1801" y="144" width="5" height="4" fill="#ccc"/><rect x="1808" y="144" width="5" height="4" fill="#ccc"/><rect x="1815" y="144" width="5" height="4" fill="#ccc"/>
<circle cx="1842" cy="140" r="8" fill="none" stroke="#ccc" stroke-width="2"/><circle cx="1842" cy="140" r="3" fill="#aaa"/><path d="M1831 134q-2 6 0 12M1828 132q-3 8 0 16" stroke="#666" fill="none"/>
<rect x="1860" y="132" width="18" height="13" fill="#ccc" stroke="#222"/><path d="M1865 135h6v6h-6zM1871 135l3-2" fill="#444"/><rect x="1863" y="146" width="12" height="2" fill="#ccc"/>
<path d="M1891 148l11-12" stroke="#c88860" stroke-width="2"/><path d="M1897 131h8l5 5-3 2-4-3-4 2z" fill="#aaa"/>
<path d="M1898 194l5 5 5-5" stroke="#555" fill="none"/>
<g fill="#ddd"><path d="M1752 383h7v-4h3v-2h7v14h-7v-2h-3v-4h-7z"/><rect x="1791" y="376" width="2" height="15"/><rect x="1796" y="376" width="2" height="15"/></g>
<path d="M1777 375v17M1813 375v17M1873 375v17" stroke="#111"/>
<path d="M1824 378l8 12 7-13M1832 383l-6-5" stroke="#ddd" fill="none"/>
<path d="M1855 381q0-5 5-5t5 5v7q0 4-5 4t-5-4z" fill="none" stroke="#ddd" stroke-width="1.500"/><path d="M1855 384h10M1860 376v8" stroke="#ddd"/>
<rect x="1884" y="377" width="14" height="14" fill="#eee" stroke="#1d28b8"/><rect x="1884" y="377" width="14" height="4" fill="#1d28b8"/><path d="M1889 385h10M1889 389h10" stroke="#111" stroke-dasharray="2 1"/>
</svg>

<!-- Asset Tracking -->
<div style="left:1247px;top:89px;width:483px;height:438px;background:#4b4b4b"></div>
<div style="left:1247px;top:89px;width:483px;height:49px;background:#fff"></div>
<div class="t" style="left:1276px;top:97px;color:#8c8c8c;font-size:11.7px">Asset Tracking</div>
<span class="t d" style="left:1254px">Server</span><span class="t d" style="left:1300px">File</span><span class="t d" style="left:1332px">Paths</span><span class="t d" style="left:1375px;font-size:12px">Bitmap Performance and Memory</span><span class="t d" style="left:1569px;font-size:12px">Options</span>
<div style="left:1250px;top:168px;width:477px;height:327px;background:#585858;border:1px solid #999"></div>
<div style="left:1252px;top:171px;width:473px;height:24px;background:#fff"></div>
<div style="left:1602px;top:171px;width:1px;height:306px;background:#e2e2e2"></div>
<div style="left:1682px;top:171px;width:1px;height:306px;background:#e2e2e2"></div>
<div class="t" style="left:1258px;top:176px;color:#111;font-size:11.4px">Name</div>
<div class="t" style="left:1608px;top:176px;color:#111;font-size:11.4px">Status</div>
<div class="t" style="left:1688px;top:176px;width:37px;overflow:hidden;color:#111;font-size:11.4px">Proxy Status</div>
<div style="left:1252px;top:213px;width:473px;height:264px">
<div class="l" style="top:0"></div><div class="l" style="top:19px"></div><div class="l" style="top:38px"></div><div class="l" style="top:57px"></div><div class="l" style="top:76px"></div><div class="l" style="top:95px"></div><div class="l" style="top:114px"></div><div class="l" style="top:133px"></div><div class="l" style="top:152px"></div><div class="l" style="top:171px"></div><div class="l" style="top:190px"></div><div class="l" style="top:209px"></div><div class="l" style="top:228px"></div><div class="l" style="top:247px"></div>
</div>
<div class="t f" style="left:1293px;top:198px">Autodesk Vault</div>
<div class="t f" style="left:1309px;top:217px">Stainless_Steel_Protein_Shaker_Bottle_max_vray.max</div>
<div class="t f" style="left:1325px;top:236px">Maps / Shaders</div>
<div class="t f" style="left:1341px;top:255px">Stainless_Steel_Shaker_Diffuse_Metal.png</div>
<div class="t f" style="left:1341px;top:274px">Stainless_Steel_Shaker_Glossiness_Metal.png</div>
<div class="t f" style="left:1341px;top:293px">Stainless_Steel_Shaker_Ior_Metal.png</div>
<div class="t f" style="left:1341px;top:312px">Stainless_Steel_Shaker_Normal_Metal.png</div>
<div class="t f" style="left:1341px;top:331px">Stainless_Steel_Shaker_Reflect_Metal.png</div>
<span class="t st" style="top:198px">Logged Ou...</span><span class="t st" style="top:217px">Ok</span><span class="t st" style="top:255px">Found</span><span class="t st" style="top:274px">Found</span><span class="t st" style="top:293px">Found</span><span class="t st" style="top:312px">Found</span><span class="t st" style="top:331px">Found</span>
<div style="left:1252px;top:477px;width:473px;height:16px;background:#f0f0f0"></div>
<div style="left:1269px;top:477px;width:402px;height:16px;background:#cdcdcd"></div>
<div style="left:1251px;top:499px;width:476px;height:23px;background:#444;border:2px solid #e8e8e8"></div>

<!-- Material browser -->
<div style="left:1248px;top:527px;width:482px;height:166px;background:#444"></div>
<div style="left:1248px;top:527px;width:482px;height:30px;background:#fff"></div>
<div class="t" style="left:1277px;top:535px;color:#8c8c8c;font-size:12px">Material/Map Browser</div>
<div class="t" style="left:1270px;top:559px;width:458px;height:18px;background:#585858;border-top:2px solid #1a1a1a;border-left:2px solid #1a1a1a;color:#c8c8c8;padding:0 0 0 2px;line-height:14px;font-size:10.8px">Search by Name ...</div>
<div style="left:1249px;top:583px;width:474px;height:109px;border:1px solid #1a1a1a;background:#404040"></div>
<div style="left:1263px;top:584px;width:1px;height:108px;background:#222"></div>
<div style="left:1263px;top:605px;width:460px;height:1px;background:#1a1a1a"></div>
<div style="left:1277px;top:601px;width:443px;height:1px;background:#1a1a1a"></div>
<div style="left:1263px;top:631px;width:460px;height:1px;background:#1a1a1a"></div>
<div class="t" style="left:1299px;top:585px;color:#d8d8d8;font-size:11.4px">Wood</div>
<div class="t" style="left:1266px;top:609px;width:451px;height:16px;border:1px solid #666;color:#ccc;padding-left:3px;line-height:15px">+ V-Ray</div>
<div style="left:1251px;top:635px;width:470px;height:24px;background:#404040"></div>
<div class="t" style="left:1252px;top:639px;width:466px;height:16px;background:#2c5899;border:1px solid #4a6a9a;color:#d4dbe6;padding-left:4px;line-height:15px">-&nbsp; Scene Materials</div>
<div style="left:1250px;top:655px;width:472px;height:4px;background:#2c5899"></div>
<div style="left:1264px;top:659px;width:448px;height:20px;background:#444;border:1px solid #1a1a1a"></div>
<div style="left:1677px;top:659px;width:35px;height:20px;background:#ad0012;clip-path:polygon(0 100%,16px 0,100% 0,100% 100%)"></div>
<div class="t" style="left:1286px;top:662px;color:#dcdcdc;font-size:11.55px">Stainless_Steel_Shaker_Metal ( VRayMtl ) [Body, lid_part_01, lid_part_02, lid_pa...</div>
<div style="left:1264px;top:679px;width:1px;height:13px;background:#1a1a1a"></div>
<div style="left:1712px;top:679px;width:1px;height:13px;background:#1a1a1a"></div>
<div style="left:1722px;top:584px;width:6px;height:108px;background:#333;border:1px solid #1a1a1a"></div>
<div style="left:1722px;top:674px;width:6px;height:10px;background:#888"></div>

<!-- Select From Scene -->
<div style="left:1248px;top:693px;width:482px;height:291px;background:#444"></div>
<div style="left:1248px;top:693px;width:482px;height:30px;background:#fff"></div>
<div class="t" style="left:1256px;top:701px;color:#111;font-size:11.3px">Select From Scene</div>
<div class="t" style="left:1711px;top:700px;width:19px;height:19px;background:#c94f4f;color:#fff;font-weight:bold;text-align:center;line-height:18px">x</div>
<div style="left:1248px;top:723px;width:482px;height:24px;background:#f0f0f0"></div>
<div class="t" style="left:1263px;top:728px;color:#111;font-size:11.4px">Select</div>
<div class="t" style="left:1313px;top:728px;color:#111;font-size:11.4px">Display</div>
<div class="t" style="left:1370px;top:728px;color:#111;font-size:11.4px">Customize</div>
<div style="left:1252px;top:776px;width:150px;height:23px;background:#4e4e4e;border:1px solid #5e5e5e"></div>
<div style="left:1254px;top:780px;width:1px;height:13px;background:#888"></div>
<div style="left:1427px;top:776px;width:22px;height:22px;background:#3a7bd5;border:1px solid #ddd"></div>
<div style="left:1479px;top:776px;width:22px;height:22px;background:#3a7bd5;border:1px solid #ddd"></div>
<div class="t" style="left:1504px;top:780px;color:#c8c8c8;font-size:11.4px">Selection Set:</div>
<div style="left:1579px;top:776px;width:121px;height:23px;background:#555;border:1px solid #fff;border-right:none"></div>
<div style="left:1687px;top:776px;width:13px;height:23px;background:#f0f0f0"></div>
<div class="t" style="left:1720px;top:775px;color:#3e3e78;font-size:10px">&gt;&gt;</div>
<div class="t" style="left:1249px;top:801px;width:481px;height:20px;background:#444;border:1px solid #777;border-top-color:#222;color:#c4c4c4;padding:3px 0 0 2px;font-size:10.7px">Name (Sorted Ascending)</div>
<div style="left:1249px;top:821px;width:481px;height:122px;background:#555;border-left:1px solid #111;border-bottom:1px solid #111"></div>
<div style="left:1300px;top:822px;width:1px;height:18px;background:#6a6a6a"></div>
<div class="t" style="left:1303px;top:824px;color:#c4c4c4;font-size:10.9px">Stainless_Steel_Protein_Shaker_Bottle</div>
<div class="t bt" style="left:1563px;top:949px;width:75px;height:23px;line-height:22px;background:#424242;border-color:#333;border-bottom-color:#111;border-right-color:#111">OK</div>
<div class="t bt" style="left:1644px;top:949px;width:75px;height:23px;line-height:22px;background:#424242;border-color:#333;border-bottom-color:#111;border-right-color:#111">Cancel</div>

<!-- dialog icons -->
<svg style="left:0;top:0" width="1920" height="1080" viewBox="0 0 1920 1080">
<!-- asset tracking titlebar -->
<rect x="1255" y="95" width="16" height="16" fill="#cfe4e4"/><use href="#logo" x="1255" y="95"/>
<path d="M1611 103h10" stroke="#999"/><rect x="1656" y="98" width="9" height="9" fill="none" stroke="#888"/><path d="M1702 98l10 10M1712 98l-10 10" stroke="#888"/>
<!-- AT toolbar -->
<rect x="1255" y="149" width="12" height="13" fill="#e6f6f0" stroke="#4ab"/><path d="M1258 154a4 4 0 0 1 7 0M1264 157a4 4 0 0 1-6 0" fill="none" stroke="#2a8a2a" stroke-width="1.500"/>
<rect x="1283" y="149" width="11" height="13" fill="#fff" stroke="#111"/><path d="M1285 152h7M1285 155h7M1285 158h7" stroke="#333"/>
<rect x="1308" y="150" width="13" height="11" fill="#d8d8d8" stroke="#555"/><path d="M1310 153h3v3h-3z" fill="#1d6"/><path d="M1314 154h5M1314 158h5" stroke="#222"/><circle cx="1311" cy="158" r="1.500" fill="#d80"/>
<rect x="1330" y="144" width="24" height="24" fill="#3a7bd5" stroke="#222"/><rect x="1337" y="151" width="12" height="12" fill="#fff"/><path d="M1337 155h12M1337 159h12M1341 151v12M1345 151v12" stroke="#3a7bd5" stroke-width=".7"/>
<circle cx="1685" cy="155" r="5" fill="#2060c0"/><path d="M1688 149q6-2 6 2 0 3-3 5v2" fill="none" stroke="#ddd" stroke-width="1.500"/>
<path d="M1709 150l5 0 1 9-5 0zM1716 149q6-2 6 2 0 3-3 5v2" fill="#aaa" stroke="#ddd"/>
<!-- tree icons -->
<path d="M1277 199l6-2 5 2v7l-5 3-6-3z" fill="#999" stroke="#bbb"/><path d="M1283 197v12M1277 202h11" stroke="#666"/>
<rect x="1291" y="215" width="16" height="16" fill="#bfe0e0"/><use href="#logo" x="1291" y="215"/>
<path d="M1312 244l3-8h8l-2 8 0 0-3 0z" fill="#2ec02e" stroke="#111"/>
<use href="#doc" x="1325" y="256"/><use href="#doc" x="1325" y="275"/><use href="#doc" x="1325" y="294"/><use href="#doc" x="1325" y="313"/><use href="#doc" x="1325" y="332"/>
<path d="M1262 481l-4 4 4 4M1716 481l3 4-3 4" fill="none" stroke="#444" stroke-width="1.500"/>
<!-- material browser -->
<rect x="1256" y="533" width="16" height="16" fill="#cfe4e4"/><use href="#logo" x="1256" y="533"/>
<path d="M1710 536l10 11M1720 536l-10 11" stroke="#999"/>
<path d="M1253 563h11M1253 566h11l-5.500 6z" fill="#111" stroke="#111"/>
<rect x="1279" y="584" width="16" height="16" fill="#c9a24c"/><path d="M1279 589h16M1279 594h16" stroke="#e3c67a"/>
<rect x="1266" y="661" width="16" height="16" fill="#999"/><circle cx="1274" cy="669" r="6.500" fill="url(#ball)"/><path d="M1268 664q6-4 12 0l-1 2h-10z" fill="#111"/>
<!-- select from scene -->
<use href="#b0" x="1252" y="752"/><use href="#s0" x="1252" y="752"/>
<use href="#b0" x="1275" y="752"/><use href="#s1" x="1275" y="752"/>
<use href="#b0" x="1298" y="752"/><use href="#s2" x="1298" y="752"/>
<use href="#b0" x="1321" y="752"/><use href="#s3" x="1321" y="752"/>
<use href="#b0" x="1344" y="752"/><use href="#s4" x="1344" y="752"/>
<use href="#b0" x="1367" y="752"/><use href="#s5" x="1367" y="752"/>
<use href="#b0" x="1390" y="752"/><use href="#s6" x="1390" y="752"/>
<use href="#b0" x="1413" y="752"/><use href="#s7" x="1413" y="752"/>
<use href="#b0" x="1436" y="752"/><use href="#s8" x="1436" y="752"/>
<use href="#b0" x="1459" y="752"/><use href="#s9" x="1459" y="752"/>
<use href="#s10" x="1483" y="752"/><use href="#s11" x="1506" y="752"/>
<rect x="1530" y="752" width="1" height="20" fill="#222"/><rect x="1605" y="752" width="1" height="20" fill="#222"/>
<rect x="1538" y="755" width="12" height="14" fill="#eee"/><path d="M1539 757h10M1539 759.500h10M1539 762h10M1539 764.500h10M1539 767h7" stroke="#555" stroke-width=".7"/>
<rect x="1561" y="755" width="12" height="14" fill="#e6e6ec"/>
<rect x="1584" y="755" width="12" height="14" fill="#eee"/><path d="M1585 757h10M1585 759.500h10M1585 762h10" stroke="#555" stroke-width=".7"/>
<path d="M1611 755h16l-6 7v6h-4v-6z" fill="#777"/>
<path d="M1635 755h14l-5 6v6h-4v-6z" fill="#ddd"/><rect x="1643" y="761" width="6" height="8" fill="#eee"/><rect x="1644.500" y="763" width="3" height="3" fill="#1d58b8"/>
<rect x="1660" y="755" width="12" height="14" fill="#eee"/><rect x="1660" y="755" width="12" height="6" fill="#333"/>
<path d="M1409 782l10 10M1419 782l-10 10" stroke="#999" stroke-width="2.500"/>
<path d="M1430 781h14l-5 6v6h-4v-6z" fill="none" stroke="#111"/><path d="M1431 790h6M1434 787v6" stroke="#111"/><rect x="1441" y="779" width="5" height="16" fill="#aaa"/>
<rect x="1452" y="776" width="1" height="22" fill="#222"/>
<path d="M1459 786l7-4 7 4-7 4zM1459 790l7 4 7-4M1459 793l7 4 7-4" fill="#bbb" stroke="#555"/>
<rect x="1486" y="779" width="8" height="6" fill="none" stroke="#111"/><path d="M1490 785v3M1484 788h12M1484 788v3M1490 788v3M1496 788v3" stroke="#111"/><rect x="1482" y="791" width="5" height="4" fill="#ddd" stroke="#111"/><rect x="1488" y="791" width="5" height="4" fill="#ddd" stroke="#111"/><rect x="1494" y="791" width="5" height="4" fill="#ddd" stroke="#111"/>
<path d="M1690 787h7l-3.500 3z" fill="#111"/>
<path d="M1720 813l3.500-5 3.500 5z" fill="#ccc"/>
<path d="M1256 825l6 5-6 5z" fill="#bbb"/><use href="#bulbY" x="1270" y="823"/>
<path d="M1287 823h-2v14h2M1297 823h2v14h-2" stroke="#888" fill="none"/><circle cx="1290" cy="828" r="3.500" fill="#bbb"/><rect x="1291" y="828" width="6" height="6" fill="#ddd"/>
</svg>
</body></html>
